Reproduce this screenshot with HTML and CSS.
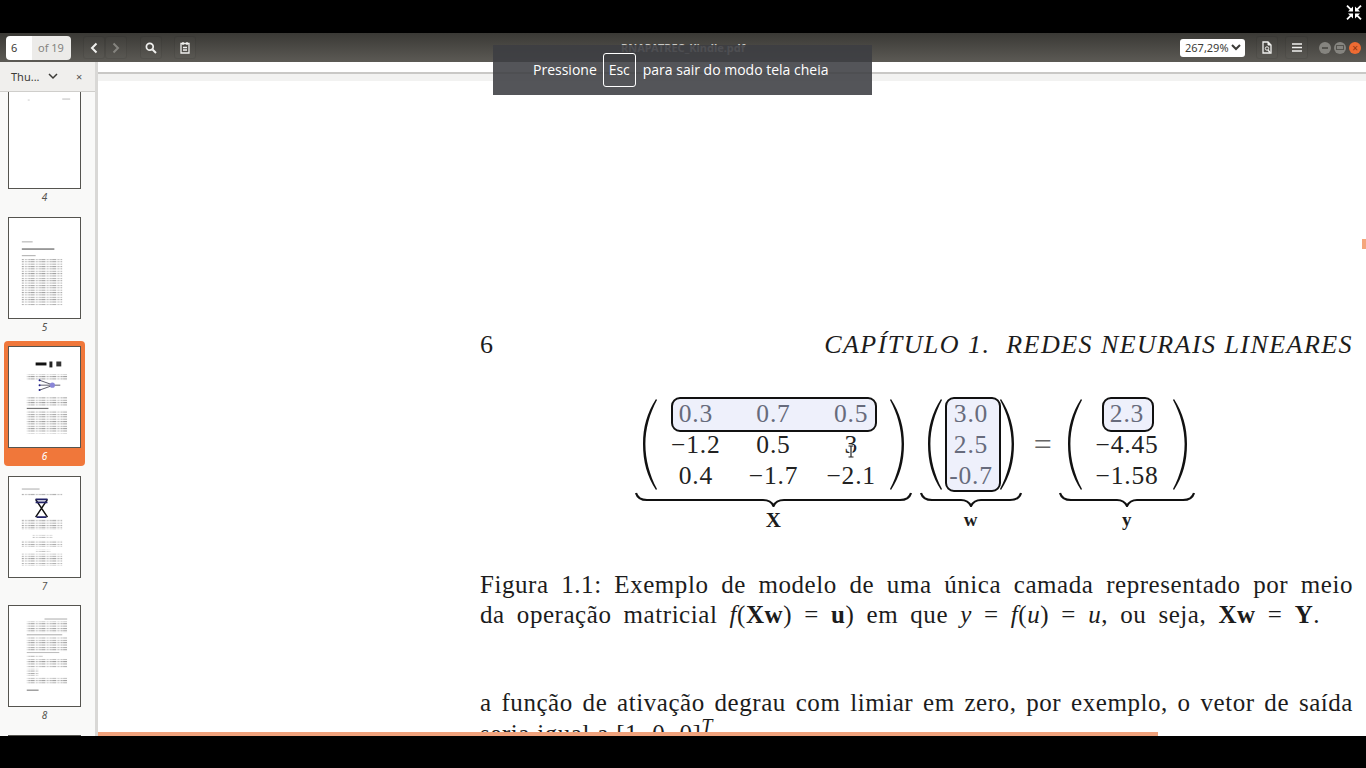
FILE: index.html
```html
<!DOCTYPE html>
<html lang="pt-BR">
<head>
    <meta charset="UTF-8">
    <title>RNAPATREC_Kindle.pdf</title>
    <link rel="stylesheet" href="styles.css">
</head>
<body>

    <div class="topBlack">
        <svg class="exitIcon" width="16" height="15" viewBox="0 0 16 15">
            <path d="M1 .7L5 4.7M15 .7L11 4.7M1 14.3L5 10.3M15 14.3L11 10.3" fill="none" stroke="#fff" stroke-width="1.8"/>
            <path d="M7 6.6V1.6L2 6.6ZM9 6.6V1.6L14 6.6ZM7 8.4V13.4L2 8.4ZM9 8.4V13.4L14 8.4Z" fill="#fff"/>
        </svg>
    </div>

    <div class="app">
        <header class="toolbar">
            <div class="toolLeft">
                <div class="pageBox"><span class="pageNum">6</span><span class="pageOf">of 19</span></div>
                <div class="btnGroup">
                    <button class="toolBtn"><svg width="8" height="12" viewBox="0 0 8 12"><path d="M6.5 1.5L2 6L6.5 10.5" fill="none" stroke="#f0f0ee" stroke-width="2"/></svg></button>
                    <button class="toolBtn"><svg width="8" height="12" viewBox="0 0 8 12"><path d="M1.5 1.5L6 6L1.5 10.5" fill="none" stroke="#85847f" stroke-width="2"/></svg></button>
                </div>
                <button class="toolBtn btnSearch"><svg width="12" height="12" viewBox="0 0 12 12"><circle cx="4.8" cy="4.8" r="3.4" fill="none" stroke="#f0f0ee" stroke-width="1.7"/><path d="M7.5 7.5L11 11" stroke="#f0f0ee" stroke-width="2"/></svg></button>
                <button class="toolBtn btnNotes"><svg width="10" height="13" viewBox="0 0 10 13"><path d="M1 2.5H9V12H1ZM3 1V4M7 1V4M3 6.5H7M3 9H7" fill="none" stroke="#f0f0ee" stroke-width="1.3"/></svg></button>
            </div>
            <div class="docTitle">RNAPATREC_Kindle.pdf</div>
            <div class="toolRight">
                <div class="zoomBox">267,29%<svg width="10" height="7" viewBox="0 0 10 7"><path d="M1 1L5 5L9 1" fill="none" stroke="#3c3b37" stroke-width="2"/></svg></div>
                <button class="toolBtn"><svg width="10" height="13" viewBox="0 0 10 13"><path d="M1 1H6L9 4V12H1Z" fill="none" stroke="#f0f0ee" stroke-width="1.3"/><path d="M6 1V4H9" fill="#f0f0ee" stroke="#f0f0ee"/><circle cx="5" cy="7.5" r="1.7" fill="none" stroke="#f0f0ee"/><path d="M6 9L8 11.5" stroke="#f0f0ee" stroke-width="1.3"/></svg></button>
                <button class="toolBtn btnMenu"><svg width="10" height="9" viewBox="0 0 10 9"><path d="M0 1H10M0 4.5H10M0 8H10" stroke="#f0f0ee" stroke-width="1.6"/></svg></button>
                <div class="winBtns">
                    <span class="winBtn"><i class="winMark"></i></span>
                    <span class="winBtn"><i class="winMark winMarkBox"></i></span>
                    <span class="winBtn winClose">×</span>
                </div>
            </div>
        </header>

        <div class="toast">Pressione <span class="escKey">Esc</span> para sair do modo tela cheia</div>

        <div class="workspace">
            <aside class="sidebar">
                <div class="sideHead">
                    <span class="sideTitle">Thu...</span>
                    <svg class="sideChevron" width="10" height="7" viewBox="0 0 10 7"><path d="M1 1L5 5L9 1" fill="none" stroke="#3c3b37" stroke-width="1.5"/></svg>
                    <span class="sideClose">×</span>
                </div>
                <div class="thumbList">
                    <svg class="defs" width="0" height="0">
                        <defs>
                            <pattern id="txt" width="11" height="2.4" patternUnits="userSpaceOnUse">
                                <rect x="0" y="0" width="4" height="1" fill="#a0a0a0"/>
                                <rect x="5" y="0" width="2.5" height="1" fill="#bcbcbc"/>
                                <rect x="8.5" y="0" width="2" height="1" fill="#a0a0a0"/>
                            </pattern>
                        </defs>
                    </svg>

                    <div class="thumb">
                        <svg class="thumbPage" viewBox="0 0 72 100"><rect x="54" y="10" width="8" height="1" fill="#bbb"/><rect x="19" y="11" width="2" height="1" fill="#ccc"/></svg>
                        <span class="thumbNum">4</span>
                    </div>
                    <div class="thumb">
                        <svg class="thumbPage" viewBox="0 0 72 100">
                            <rect x="13" y="23" width="11" height="1" fill="#aaa"/>
                            <rect x="13" y="30" width="33" height="1.6" fill="#888"/>
                            <rect x="13" y="37" width="14" height="1" fill="#aaa"/>
                            <rect x="13" y="40" width="41" height="48" fill="url(#txt)"/>
                        </svg>
                        <span class="thumbNum">5</span>
                    </div>
                    <div class="thumb thumbSel">
                        <svg class="thumbPage" viewBox="0 0 72 100">
                            <rect x="27" y="15" width="11" height="3" fill="#111"/>
                            <rect x="41" y="14" width="3" height="6" fill="#222"/>
                            <rect x="48" y="14" width="5" height="5" fill="#333"/>
                            <rect x="18" y="27" width="41" height="6" fill="url(#txt)"/>
                            <path d="M31 33L45 38M31 38H45M31 43L45 38M45 38H52" stroke="#334" stroke-width=".8"/>
                            <circle cx="44" cy="38" r="2.6" fill="#8a86d8"/>
                            <circle cx="31" cy="33" r="1" fill="#228"/><circle cx="31" cy="38" r="1" fill="#228"/><circle cx="31" cy="43" r="1" fill="#228"/>
                            <rect x="18" y="50" width="41" height="9" fill="url(#txt)"/>
                            <rect x="18" y="61" width="22" height="1.2" fill="#777"/>
                            <rect x="18" y="64" width="41" height="23" fill="url(#txt)"/>
                        </svg>
                        <span class="thumbNum">6</span>
                    </div>
                    <div class="thumb">
                        <svg class="thumbPage" viewBox="0 0 72 100">
                            <rect x="13" y="11" width="18" height="1" fill="#aaa"/>
                            <rect x="13" y="16" width="41" height="2" fill="url(#txt)"/>
                            <path d="M27 22L39 40M39 22L27 40" stroke="#111" stroke-width="1.5"/>
                            <path d="M27 22H39M27 25H39M28 40H38" stroke="#226" stroke-width="1.6"/>
                            <rect x="13" y="42" width="41" height="11" fill="url(#txt)"/>
                            <rect x="24" y="58" width="20" height="3" fill="url(#txt)"/>
                            <rect x="13" y="64" width="41" height="6" fill="url(#txt)"/>
                            <rect x="27" y="73" width="15" height="2" fill="url(#txt)"/>
                            <rect x="13" y="77" width="41" height="12" fill="url(#txt)"/>
                        </svg>
                        <span class="thumbNum">7</span>
                    </div>
                    <div class="thumb">
                        <svg class="thumbPage" viewBox="0 0 72 100">
                            <rect x="36" y="12" width="23" height="1" fill="#aaa"/>
                            <rect x="18" y="15" width="41" height="11" fill="url(#txt)"/>
                            <rect x="18" y="28" width="36" height="1" fill="#aaa"/>
                            <rect x="18" y="31" width="41" height="14" fill="url(#txt)"/>
                            <rect x="18" y="46" width="33" height="1" fill="#bbb"/>
                            <rect x="18" y="49" width="16" height="2" fill="url(#txt)"/>
                            <rect x="18" y="53" width="41" height="9" fill="url(#txt)"/>
                            <rect x="18" y="63" width="12" height="7" fill="url(#txt)"/>
                            <rect x="18" y="72" width="41" height="6" fill="url(#txt)"/>
                            <rect x="18" y="84" width="12" height="1.4" fill="#999"/>
                        </svg>
                        <span class="thumbNum">8</span>
                    </div>
                    <div class="thumb">
                        <svg class="thumbPage" viewBox="0 0 72 100"></svg>
                    </div>
                </div>
            </aside>

            <div class="splitter"></div>

            <main class="viewer">
                <div class="prevPage"></div>
                <div class="pageGap"></div>
                <article class="pdfPage">
                    <div class="runHead">
                        <span>6</span>
                        <em class="runTitle">CAPÍTULO 1.&nbsp; REDES NEURAIS LINEARES</em>
                    </div>

                    <div class="equation">
                        <div class="term termX">
                            <div class="matrix">
                                <svg class="paren" viewBox="0 0 15 95"><path d="M14 2C5 16 1 30 1 47C1 65 5 79 14 93L15 92C7.5 78 3.4 62 3.4 47C3.4 32 7.5 17 15 3Z"/></svg>
                                <div class="cells cells3">
                                    <div class="hl hlRow"></div>
                                    <span class="soft">0.3</span><span class="soft">0.7</span><span class="soft">0.5</span>
                                    <span>−1.2</span><span>0.5</span><span>3</span>
                                    <span>0.4</span><span>−1.7</span><span>−2.1</span>
                                </div>
                                <svg class="paren flip" viewBox="0 0 15 95"><path d="M14 2C5 16 1 30 1 47C1 65 5 79 14 93L15 92C7.5 78 3.4 62 3.4 47C3.4 32 7.5 17 15 3Z"/></svg>
                            </div>
                            <svg class="brace" width="277" height="15" viewBox="0 0 277 15"><path d="M1 1Q3 8 12 8H128Q136 8 138.5 14Q141 8 149 8H265Q274 8 276 1"/></svg>
                            <b class="braceLabel labelX">X</b>
                        </div>
                        <div class="term termW">
                            <div class="matrix">
                                <svg class="paren" viewBox="0 0 15 95"><path d="M14 2C5 16 1 30 1 47C1 65 5 79 14 93L15 92C7.5 78 3.4 62 3.4 47C3.4 32 7.5 17 15 3Z"/></svg>
                                <div class="cells cells1">
                                    <div class="hl hlCol"></div>
                                    <span class="soft">3.0</span>
                                    <span class="soft">2.5</span>
                                    <span class="soft">-0.7</span>
                                </div>
                                <svg class="paren flip" viewBox="0 0 15 95"><path d="M14 2C5 16 1 30 1 47C1 65 5 79 14 93L15 92C7.5 78 3.4 62 3.4 47C3.4 32 7.5 17 15 3Z"/></svg>
                            </div>
                            <svg class="brace" width="102" height="15" viewBox="0 0 102 15"><path d="M1 1Q3 8 12 8H41Q48 8 51 14Q54 8 61 8H90Q99 8 101 1"/></svg>
                            <b class="braceLabel">w</b>
                        </div>
                        <div class="equals">=</div>
                        <div class="term termY">
                            <div class="matrix">
                                <svg class="paren" viewBox="0 0 15 95"><path d="M14 2C5 16 1 30 1 47C1 65 5 79 14 93L15 92C7.5 78 3.4 62 3.4 47C3.4 32 7.5 17 15 3Z"/></svg>
                                <div class="cells cells1">
                                    <div class="hl hlCell"></div>
                                    <span class="soft">2.3</span>
                                    <span>−4.45</span>
                                    <span>−1.58</span>
                                </div>
                                <svg class="paren flip" viewBox="0 0 15 95"><path d="M14 2C5 16 1 30 1 47C1 65 5 79 14 93L15 92C7.5 78 3.4 62 3.4 47C3.4 32 7.5 17 15 3Z"/></svg>
                            </div>
                            <svg class="brace" width="136" height="15" viewBox="0 0 136 15"><path d="M1 1Q3 8 12 8H58Q65 8 68 14Q71 8 78 8H124Q133 8 135 1"/></svg>
                            <b class="braceLabel">y</b>
                        </div>
                    </div>

                    <p class="caption">
                        <span class="fitLine">Figura 1.1: Exemplo de modelo de uma única camada representado por meio</span>
                        <span class="fitLine fitShort">da operação matricial <i>f</i>(<b>Xw</b>) = <b>u</b>) em que <i>y</i> = <i>f</i>(<i>u</i>) = <i>u</i>, ou seja, <b>Xw</b> = <b>Y</b>.</span>
                    </p>
                    <p class="bodyText">
                        <span class="fitLine">a função de ativação degrau com limiar em zero, por exemplo, o vetor de saída</span>
                        <span class="lastLine">seria igual a [1, 0, 0]<sup class="supT"><i>T</i></sup>.</span>
                    </p>
                </article>

                <svg class="textCursor" width="8" height="13" viewBox="0 0 8 13"><path d="M1 1H7M4 1V12M1 12H7" stroke="#fff" stroke-width="3"/><path d="M1.5 1H6.5M4 1V12M1.5 12H6.5" stroke="#222" stroke-width="1.2"/></svg>
                <div class="scrollMark"></div>
            </main>
            <div class="progressBar"></div>
        </div>
    </div>

</body>
</html>
```

FILE: styles.css
```css
html, body {
    margin: 0;
    height: 768px;
    overflow: hidden;
    background-color: #000;
}

body {
    display: flex;
    flex-direction: column;
    font-family: "Noto Sans", sans-serif;
}

.topBlack {
    height: 33px;
    flex: none;
    display: flex;
    justify-content: flex-end;
    align-items: flex-start;
    padding: 5px 4px 0 0;
    box-sizing: border-box;
}

.app {
    position: relative;
    height: 703px;
    flex: none;
    display: flex;
    flex-direction: column;
}

/* barra de ferramentas */
.toolbar {
    height: 29px;
    flex: none;
    display: grid;
    grid-template-columns: 1fr auto 1fr;
    align-items: center;
    background: linear-gradient(#3a3935, #5c5a55);
}

.toolLeft, .toolRight {
    display: flex;
    align-items: center;
}

.toolLeft {
    padding-left: 6px;
}

.toolRight {
    justify-content: flex-end;
    padding-right: 5px;
    gap: 7px;
}

.pageBox {
    width: 65px;
    height: 24px;
    display: flex;
    border-radius: 4px;
    overflow: hidden;
    font-size: 11px;
    line-height: 24px;
}

.pageNum {
    width: 26px;
    padding-left: 5px;
    box-sizing: border-box;
    background-color: #fff;
    color: #3c3b37;
}

.pageOf {
    flex: 1;
    padding-left: 6px;
    background-color: #ecebe9;
    color: #85847f;
}

.btnGroup {
    display: flex;
    margin-left: 12px;
}

.toolBtn {
    width: 22px;
    height: 23px;
    padding: 0;
    display: flex;
    align-items: center;
    justify-content: center;
    background-color: rgba(255, 255, 255, 0.01);
    border: 1px solid rgba(0, 0, 0, 0.08);
    border-radius: 3px;
}

.btnSearch {
    margin-left: 13px;
}

.btnNotes {
    margin-left: 12px;
}

.btnMenu {
    width: 23px;
}

.docTitle {
    font-size: 11px;
    font-weight: 700;
    color: #c8c7c3;
}

.zoomBox {
    width: 65px;
    height: 18px;
    margin-right: 4px;
    display: flex;
    align-items: center;
    justify-content: space-between;
    padding: 0 4px 0 5px;
    box-sizing: border-box;
    background-color: #fff;
    border-radius: 3px;
    font-size: 11px;
    color: #3c3b37;
}

.winBtns {
    display: flex;
    gap: 3px;
    margin-left: 4px;
}

.winBtn {
    width: 12px;
    height: 12px;
    display: flex;
    align-items: center;
    justify-content: center;
    border-radius: 50%;
    background-color: #85847f;
}

.winMark {
    width: 6px;
    height: 2px;
    background-color: #55544f;
}

.winMarkBox {
    height: 3px;
    background-color: transparent;
    border: 1px solid #55544f;
}

.winClose {
    background-color: #ee6b33;
    color: #8a3412;
    font-size: 10px;
    line-height: 12px;
}

/* aviso de tela cheia */
.toast {
    position: absolute;
    left: 493px;
    top: 12px;
    width: 379px;
    height: 50px;
    display: flex;
    align-items: center;
    gap: 7px;
    padding: 0 0 2px 40px;
    box-sizing: border-box;
    background-color: rgba(60, 62, 66, 0.88);
    color: #fff;
    font-family: "Open Sans", sans-serif;
    font-size: 14px;
    z-index: 5;
}

.escKey {
    width: 33px;
    height: 34px;
    margin: 2px 0 0 -1px;
    padding-bottom: 2px;
    display: flex;
    align-items: center;
    justify-content: center;
    box-sizing: border-box;
    border: 1px solid #fff;
    border-radius: 3px;
}

.workspace {
    position: relative;
    flex: 1;
    min-height: 0;
    display: flex;
}

/* miniaturas */
.sidebar {
    width: 95px;
    flex: none;
    display: flex;
    flex-direction: column;
    background-color: #f9f9f8;
    overflow: hidden;
}

.sideHead {
    position: relative;
    z-index: 1;
    height: 30px;
    flex: none;
    display: flex;
    align-items: center;
    box-sizing: border-box;
    padding-left: 11px;
    background-color: #f0efed;
    border-bottom: 1px solid #cfcecb;
    color: #3c3b37;
    font-size: 11px;
}

.sideTitle {
    width: 37px;
}

.sideClose {
    margin-left: 18px;
    font-size: 11px;
    color: #55544f;
}

.thumbList {
    margin-top: -10px;
    padding-left: 4px;
}

.defs {
    position: absolute;
}

.thumb {
    width: 81px;
    height: 125px;
    margin-bottom: 4.5px;
    padding: 5px 4px 0;
    box-sizing: border-box;
    display: flex;
    flex-direction: column;
    align-items: center;
    border-radius: 4px;
}

.thumbPage {
    width: 73px;
    height: 102px;
    flex: none;
    box-sizing: border-box;
    background-color: #fff;
    border: 1px solid #55544f;
}

.thumbPage > * {
    filter: blur(0.3px);
}

.thumbNum {
    margin-top: 1px;
    font-size: 10px;
    line-height: 15px;
    font-style: italic;
    color: #55544f;
}

.thumbSel {
    background-color: #f0773a;
}

.thumbSel .thumbNum {
    color: #fff;
}

.splitter {
    width: 3px;
    flex: none;
    background-color: #d9d8d6;
}

/* documento */
.viewer {
    position: relative;
    flex: 1;
    overflow: hidden;
    background-color: #fff;
}

.prevPage {
    height: 12px;
    box-sizing: border-box;
    border-bottom: 2px solid #c9c8c6;
}

.pageGap {
    height: 7px;
    background-color: #f2f2f1;
}

.pdfPage {
    width: 873px;
    margin-left: 382px;
    padding-top: 249px;
    font-family: "Liberation Serif", serif;
    font-size: 25px;
    letter-spacing: 0.55px;
    color: #1c1c1c;
}

.runHead {
    display: flex;
    justify-content: space-between;
    font-size: 26px;
    line-height: 30px;
}

.runTitle {
    letter-spacing: 1.45px;
}

.equation {
    display: flex;
    margin-top: 37px;
    margin-left: 155px;
}

.term {
    display: flex;
    flex-direction: column;
    align-items: center;
}

.termX {
    width: 277px;
    margin-right: 8px;
}

.termW {
    width: 102px;
}

.termY {
    width: 136px;
}

.matrix {
    display: flex;
    height: 95px;
}

.paren {
    width: 15px;
    height: 95px;
    flex: none;
    fill: #111;
}

.flip {
    transform: scaleX(-1);
}

.cells {
    position: relative;
    display: grid;
    grid-auto-rows: 31px;
    line-height: 31px;
    padding-top: 1px;
    text-align: center;
    font-size: 25.5px;
    letter-spacing: 0.8px;
    color: #222;
}

.cells span {
    position: relative;
}

.cells3 {
    grid-template-columns: repeat(3, 1fr);
    width: 233px;
}

.cells1 {
    grid-template-columns: 1fr;
}

.termW .cells1 {
    width: 58px;
}

.termY .cells1 {
    width: 91px;
}

.cells .soft {
    color: #676b7c;
}

.hl {
    position: absolute;
    top: 0;
    box-sizing: border-box;
    background-color: #eef0fb;
    border: 2px solid #111;
    border-radius: 9px;
}

.hlRow {
    left: 14px;
    width: 206px;
    height: 35px;
}

.hlCol {
    left: 3px;
    width: 56px;
    height: 95px;
}

.hlCell {
    left: 20px;
    width: 52px;
    height: 35px;
}

.brace {
    display: block;
    flex: none;
}

.brace path {
    fill: none;
    stroke: #111;
    stroke-width: 2.2;
}

.braceLabel {
    margin-top: 2px;
    font-size: 19px;
    line-height: 22px;
}

.labelX {
    font-size: 21px;
}

.equals {
    width: 37px;
    height: 95px;
    line-height: 95px;
    padding-left: 5px;
    box-sizing: border-box;
    text-align: center;
    font-size: 32px;
    color: #666;
}

.caption {
    margin: 39px 0 0;
    line-height: 30px;
}

.bodyText {
    margin: 57px 0 0;
    line-height: 31px;
}

.fitLine {
    display: block;
    text-align: justify;
    text-align-last: justify;
}

.fitShort {
    width: 840px;
}

.lastLine {
    word-spacing: 0.5px;
}

.supT {
    font-size: 20px;
    line-height: 0;
}

.textCursor {
    position: absolute;
    left: 749px;
    top: 383px;
}

.scrollMark {
    position: absolute;
    right: 0;
    top: 177px;
    width: 4px;
    height: 10px;
    background-color: #f4a67c;
}

.progressBar {
    position: absolute;
    left: 98px;
    bottom: 0;
    width: 1060px;
    height: 4px;
    background-color: #f0a27c;
}
```
